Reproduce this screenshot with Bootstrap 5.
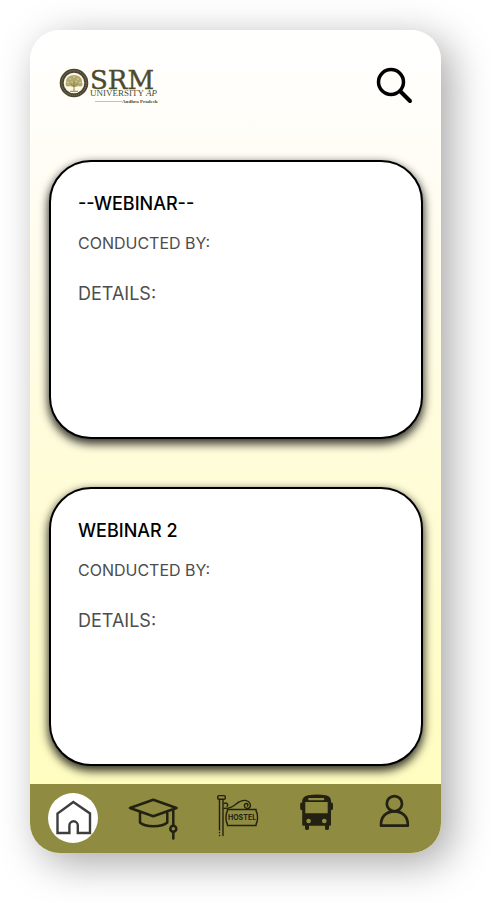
<!DOCTYPE html>
<html lang="en">
<head>
<meta charset="utf-8">
<meta name="viewport" content="width=device-width, initial-scale=1">
<title>SRM University AP</title>
<link href="https://cdn.jsdelivr.net/npm/bootstrap@5.3.0/dist/css/bootstrap.min.css" rel="stylesheet">
<style>
body { background: #fff; padding: 30px 50px 50px 30px; font-family: Inter, "Liberation Sans", sans-serif; }
.phone { border-radius: 30px; background: linear-gradient(#fff 0%, #fffdf5 16%, #fffcda 52%, #fffdc0 92%); box-shadow: 10px 10px 40px rgba(0,0,0,.35); }
.topbar { padding: 37px 28px 56px 29px; }
.topbar svg, .tabbar svg { display: block; overflow: visible; }
.feed { gap: 48px; padding: 0 18px 18px 19px; }
.webinar { min-height: 279px; border: 2px solid #000; border-radius: 42px; padding: 28px 27px; box-shadow: 0 4px 10px 1px rgba(0,0,0,.8); }
.webinar h2 { font-size: 18px; line-height: 28px; font-weight: 500; color: #000; margin-bottom: 13px; }
.webinar p { line-height: 24px; color: #4d4d4d; margin-bottom: 27px; font-size: 16px; font-weight: 400; }
.webinar .details { font-size: 18px; }
.tabbar { background: #8f8c41; border-radius: 0 0 30px 30px; padding: 9px 8px 10px 3px; color: #232111; }
</style>
</head>
<body>
<main class="phone d-flex flex-column">
  <header class="topbar d-flex justify-content-between align-items-start">
    <a href="#" aria-label="SRM University AP">
      <svg width="98" height="37" viewBox="0 0 98 37" font-family="Liberation Serif, serif" fill="#4d4a2b">
        <circle cx="15" cy="16" r="12.300" fill="#fbf8e6" stroke="#4a4530" stroke-width="4"/>
        <circle cx="15" cy="16" r="12.300" fill="none" stroke="#8b8667" stroke-width="1" stroke-dasharray="1 1"/>
        <g fill="#b3a970"><ellipse cx="15" cy="14" rx="8" ry="6"/><circle cx="9" cy="17" r="2.500"/><circle cx="21" cy="17" r="2.500"/></g>
        <g fill="#ded6a6"><circle cx="11" cy="12" r=".8"/><circle cx="15" cy="10" r=".8"/><circle cx="19" cy="12" r=".8"/><circle cx="9" cy="15.500" r=".8"/><circle cx="21" cy="15.500" r=".8"/><circle cx="13" cy="15" r=".7"/><circle cx="17" cy="14.500" r=".7"/></g>
        <path d="M15 14v10M11.500 16.500L15 19.500l3.500-3M11 24.300h8" fill="none" stroke="#8b8045"/>
        <text x="31" y="22" font-size="26" font-family="DejaVu Serif, serif" stroke="#4d4a2b" stroke-width=".4">SRM</text>
        <text x="31" y="29" font-size="9">UNIVERSITY <tspan font-style="italic">AP</tspan></text>
        <path d="M36 34.500h27" stroke="#aaa894" stroke-width=".7"/>
        <text x="63" y="36" font-size="5" font-weight="bold">Andhra Pradesh</text>
      </svg>
    </a>
    <button type="button" class="btn p-0 border-0" aria-label="Search">
      <svg width="36" height="37" viewBox="0 0 36 37" fill="none" stroke="#000" stroke-width="4" stroke-linecap="round"><circle cx="14" cy="15" r="12.500" stroke-width="3.500"/><path d="M23.500 24.500l9.500 9.500"/></svg>
    </button>
  </header>
  <div class="feed d-flex flex-column">
    <article class="webinar bg-white">
      <h2>--WEBINAR--</h2>
      <p>CONDUCTED BY:</p>
      <p class="details">DETAILS:</p>
    </article>
    <article class="webinar bg-white">
      <h2>WEBINAR 2</h2>
      <p>CONDUCTED BY:</p>
      <p class="details">DETAILS:</p>
    </article>
  </div>
  <nav class="tabbar d-flex" aria-label="Main">
    <a href="#" class="flex-fill d-flex justify-content-center text-reset" aria-label="Home" aria-current="page">
      <svg width="50" height="50" viewBox="0 0 50 50"><circle cx="25" cy="25" r="25" fill="#fff"/><path d="M25.300 9L42 20.500V40H29.800V32.500a4.200 4.200 0 0 0-8.400 0V40H9.500V20.500z" fill="none" stroke="#3d3d3d" stroke-width="2.400"/></svg>
    </a>
    <a href="#" class="flex-fill d-flex justify-content-center text-reset" aria-label="Academics">
      <svg width="50" height="50" viewBox="0 0 50 50" fill="none" stroke="currentColor" stroke-width="2.500" stroke-linejoin="round" stroke-linecap="round"><path d="M2 15L25.300 6.800 48.500 15 25.300 23.300zM12 19.500v10c5 5 22 5 27.300 0v-10M45.300 16.500v16M45.300 39v6.500"/><circle cx="45.300" cy="35.700" r="3"/></svg>
    </a>
    <a href="#" class="flex-fill d-flex justify-content-center text-reset" aria-label="Hostel">
      <svg width="50" height="50" viewBox="0 0 50 50" fill="none" stroke="currentColor" stroke-width="1.400" stroke-linecap="round"><rect x="9.700" y="2.600" width="7.600" height="3.600" rx="1.200"/><path d="M11.500 6.500V37M11.500 39.500v.2M11.500 42.500h.3M15 6.500V42.500"/><path d="M19.500 16.500H48q0 2 1 3.500 1 4.500 0 9-1 1.500-1 3.500H19.500q0-2-1-3.500-1-4.500 0-9 1-1.500 1-3.500z"/><path d="M16 15.300C25 16 27 11 31 9c4-2.500 9-2.300 11 1.500 1.300 3-.7 5.300-3.200 5-3-.5-3.200-4.500-.6-5 1.800-.2 2.200 1.700 1.200 2.500M16 10.500c2.500-1.500 5 1 3 2.800"/><text x="20" y="27" font-family="Inter, sans-serif" font-size="7" font-weight="700" fill="currentColor" stroke="none">HOSTEL</text></svg>
    </a>
    <a href="#" class="flex-fill d-flex justify-content-center text-reset" aria-label="Bus">
      <svg width="50" height="50" viewBox="0 0 50 50" fill="currentColor"><path fill-rule="evenodd" d="M20 2.200Q29 1 38 2.200 42.500 3 43 7.500V9.500h.7q1.300 0 1.300 1.500v4.500q0 1.700-2 1.700V31.500q0 1.200-1.300 1.200H41v2.800q0 1.500-2 1.500t-2-1.500v-2.800H21v2.800q0 1.500-2 1.500t-2-1.500v-2.800h-1.500q-1.300 0-1.300-1.200V17.200q-2 0-2-1.700V11q0-1.500 1.300-1.500h.7V7.500Q15 3 20 2.200zM21 5q-.8 0-.8 1.200t.8 1.100H35.500q.8 0 .8-1.100T35.500 5zM17.300 9v11.200H39.700V9zM20.600 25.700a2.300 2.300 0 1 0 .01 0zM36.300 25.700a2.300 2.300 0 1 0 .01 0z"/></svg>
    </a>
    <a href="#" class="flex-fill d-flex justify-content-center text-reset" aria-label="Profile">
      <svg width="50" height="50" viewBox="0 0 50 50" fill="none" stroke="currentColor" stroke-width="2.700" stroke-linejoin="round"><circle cx="26.400" cy="10.700" r="7.600"/><path d="M13 32.700C12.500 24 18 18.300 26.400 18.300S40.300 24 39.800 32.700z"/></svg>
    </a>
  </nav>
</main>
<script src="https://cdn.jsdelivr.net/npm/bootstrap@5.3.0/dist/js/bootstrap.bundle.min.js"></script>
</body>
</html>
